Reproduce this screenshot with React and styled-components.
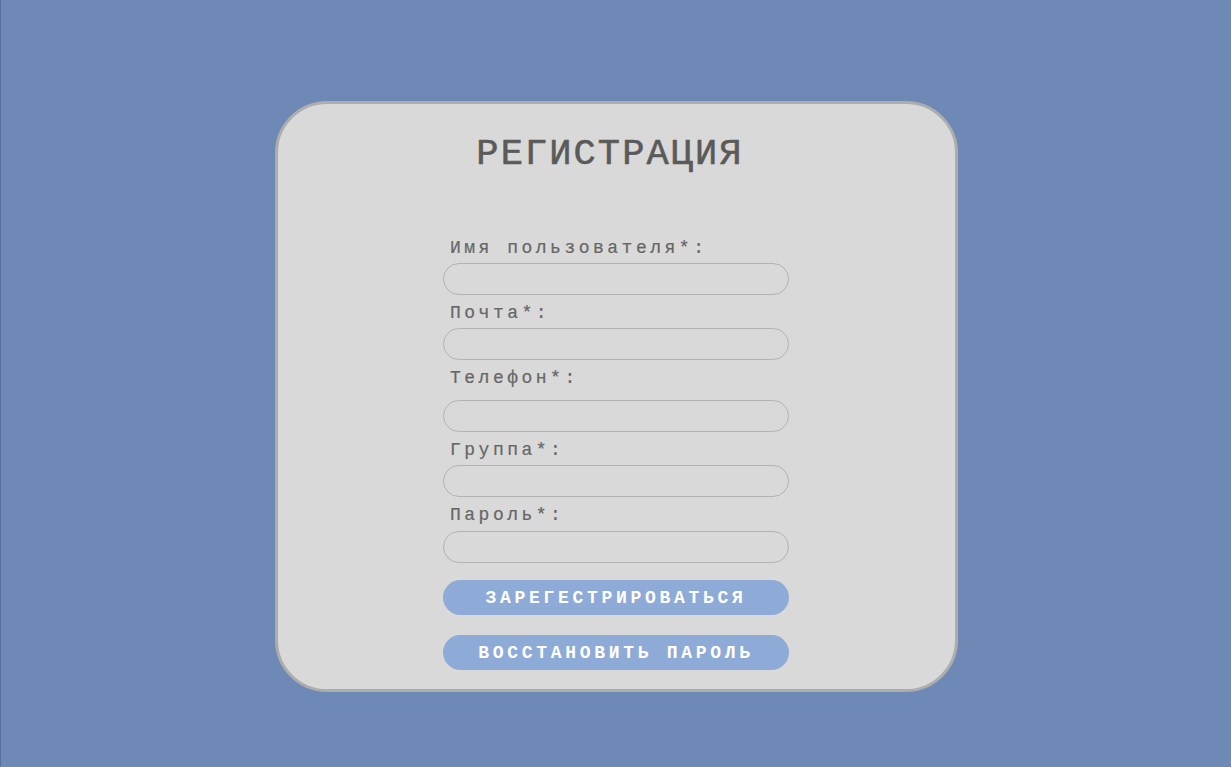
import React from "react";
import styled, { createGlobalStyle } from "styled-components";

const GlobalStyle = createGlobalStyle`
  html, body {
    margin: 0;
    padding: 0;
    background: #6e89b6;
  }
  * { box-sizing: border-box; }
`;

const Page = styled.div`
  min-height: 767px;
  background: #6e89b6;
  border-left: 1px solid #55709c;
  display: flex;
  justify-content: center;
  align-items: flex-start;
  padding-top: 101px;
  font-family: "Liberation Mono", "DejaVu Sans Mono", monospace;
`;

const Card = styled.div`
  width: 683px;
  height: 591px;
  background: #d9d9d9;
  border: 3px solid #adadad;
  border-radius: 52px;
  display: flex;
  flex-direction: column;
  align-items: center;
`;

const Title = styled.h1`
  margin: 28px 12px 0 0;
  font-size: 37px;
  font-weight: 400;
  letter-spacing: 2.1px;
  color: #5a5a5a;
  line-height: 44px;
  -webkit-text-stroke: 0.6px #5a5a5a;
`;

const Form = styled.form`
  width: 346px;
  margin-top: 62px;
  display: flex;
  flex-direction: column;
`;

const Field = styled.div`
  display: flex;
  flex-direction: column;
  margin-top: ${(p) => p.$gap || 0}px;
`;

const Label = styled.label`
  padding-left: 7px;
  font-size: 18px;
  letter-spacing: 3.5px;
  line-height: 20px;
  color: #666666;
  margin-bottom: ${(p) => p.$below || 4}px;
  -webkit-text-stroke: 0.2px #666666;
`;

const Input = styled.input`
  width: 346px;
  height: 32px;
  border: 1px solid #b3b3b3;
  border-radius: 16px;
  background: #d9d9d9;
  outline: none;
  padding: 0 14px;
`;

const Button = styled.button`
  width: 346px;
  height: 35px;
  border: none;
  border-radius: 18px;
  background: #8eaad6;
  color: #ffffff;
  font-family: "Liberation Mono", "DejaVu Sans Mono", monospace;
  font-weight: 700;
  font-size: 18px;
  letter-spacing: 3.7px;
  margin-top: ${(p) => p.$gap}px;
  cursor: pointer;
`;

const fields = [
  { label: "Имя пользователя*:", gap: 0, below: 5 },
  { label: "Почта*:", gap: 8, below: 5 },
  { label: "Телефон*:", gap: 8, below: 12 },
  { label: "Группа*:", gap: 8, below: 5 },
  { label: "Пароль*:", gap: 8, below: 6 },
];

export default function App() {
  return (
    <>
      <GlobalStyle />
      <Page>
        <Card>
          <Title>РЕГИСТРАЦИЯ</Title>
          <Form onSubmit={(e) => e.preventDefault()}>
            {fields.map((f) => (
              <Field key={f.label} $gap={f.gap}>
                <Label $below={f.below}>{f.label}</Label>
                <Input />
              </Field>
            ))}
            <Button $gap={17}>ЗАРЕГЕСТРИРОВАТЬСЯ</Button>
            <Button $gap={20}>ВОССТАНОВИТЬ ПАРОЛЬ</Button>
          </Form>
        </Card>
      </Page>
    </>
  );
}
